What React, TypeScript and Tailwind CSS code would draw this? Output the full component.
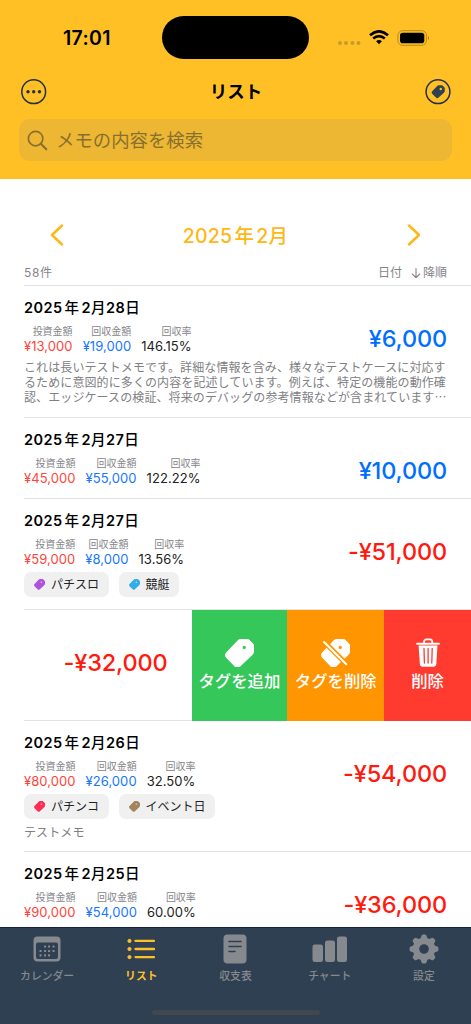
import {FC, ReactNode} from "react";
import clsx from "clsx";

type Tag = { name: string; color: string };

type Entry = {
  id: string;
  date: string;
  invest: string;
  payback: string;
  rate: string;
  total: string;
  plus?: boolean;
  tags?: Tag[];
  memo?: string;
};

const entries: Entry[] = [
  {
    id: "e1",
    date: "2025年2月28日",
    invest: "¥13,000",
    payback: "¥19,000",
    rate: "146.15%",
    total: "¥6,000",
    plus: true,
    memo: "これは長いテストメモです。詳細な情報を含み、様々なテストケースに対応す\nるために意図的に多くの内容を記述しています。例えば、特定の機能の動作確\n認、エッジケースの検証、将来のデバッグの参考情報などが含まれています…",
  },
  { id: "e2", date: "2025年2月27日", invest: "¥45,000", payback: "¥55,000", rate: "122.22%", total: "¥10,000", plus: true },
  {
    id: "e3",
    date: "2025年2月27日",
    invest: "¥59,000",
    payback: "¥8,000",
    rate: "13.56%",
    total: "-¥51,000",
    tags: [
      { name: "パチスロ", color: "text-[#af52de]" },
      { name: "競艇", color: "text-[#32ade6]" },
    ],
  },
];

const entriesAfterSwipe: Entry[] = [
  {
    id: "e5",
    date: "2025年2月26日",
    invest: "¥80,000",
    payback: "¥26,000",
    rate: "32.50%",
    total: "-¥54,000",
    tags: [
      { name: "パチンコ", color: "text-[#ff2d55]" },
      { name: "イベント日", color: "text-[#a2845e]" },
    ],
    memo: "テストメモ",
  },
  { id: "e6", date: "2025年2月25日", invest: "¥90,000", payback: "¥54,000", rate: "60.00%", total: "-¥36,000" },
];

const TagIcon: FC<{ className?: string; slash?: boolean }> = ({ className, slash }) => (
  <svg viewBox="0 0 86 85" className={className} fill="none">
    <path
      fill="currentColor"
      fillRule="evenodd"
      d="M46 0H66Q70 0 73 3L83 13Q86 16 86 20V38Q86 43 82 47L46 81Q37 89 28 81L4 56Q-4 48 4 39L38 4Q41 0 46 0ZM57 20a5 5 0 1 0 0 10a5 5 0 1 0 0-10Z"
    />
    {slash && (
      <>
        <path d="M4 3L80 79" stroke="#ff9500" strokeWidth="15" />
        <path d="M9 9L75 75" stroke="currentColor" strokeWidth="6" strokeLinecap="round" />
      </>
    )}
  </svg>
);

const Header: FC = () => (
  <header className="h-[179px] shrink-0 bg-[#ffc026]">
    <div className="grid h-[75px] grid-cols-[162px_147px_1fr] items-center">
      <div className="pt-[1px] pl-[63px] text-[19.5px] font-semibold leading-6 tracking-[0.35px]">17:01</div>
      <div className="h-[43px] rounded-full bg-black" />
      <div className="flex items-center pl-[28px]">
        <svg width="24" height="6" className="mt-[11px]" fill="#c99a2b">
          <circle cx="3" cy="3" r="2" />
          <circle cx="9" cy="3" r="2" />
          <circle cx="15.5" cy="3" r="2" />
          <circle cx="21.5" cy="3" r="2" />
        </svg>
        <svg width="20" height="15" viewBox="0 0 20 15" className="ml-[8px]" fill="none" stroke="#000" strokeWidth="2.6">
          <path d="M1 5.2Q10 -2.6 19 5.2" />
          <path d="M4.2 8.6Q10 3.8 15.8 8.6" />
          <path d="M7.1 11.2Q10 9 12.9 11.2L10 14.2Z" fill="#000" stroke="none" />
        </svg>
        <svg width="33" height="16" viewBox="0 0 33 16" className="ml-[8px]">
          <rect x="0.9" y="0.7" width="28.5" height="14.6" rx="4.6" fill="none" stroke="#b78a20" />
          <rect x="3" y="2.8" width="24.3" height="10.4" rx="2.8" />
          <path d="M31 5.6Q32.7 8 31 10.4Z" fill="#8a6918" />
        </svg>
      </div>
    </div>

    <div className="flex h-[33px] items-center justify-between px-[21px]">
      <svg width="26" height="26" viewBox="0 0 26 26" fill="#22304a">
        <circle cx="12.7" cy="12.7" r="11.9" fill="none" stroke="#22304a" strokeWidth="1.5" />
        <circle cx="7" cy="12.7" r="1.7" />
        <circle cx="12.7" cy="12.7" r="1.7" />
        <circle cx="18.5" cy="12.7" r="1.7" />
      </svg>
      <h1 className="text-[17.5px] font-bold leading-6">リスト</h1>
      <svg width="26" height="26" viewBox="0 0 26 26" className="-mr-[1px]">
        <circle cx="13" cy="12.7" r="11.9" fill="none" stroke="#22304a" strokeWidth="1.5" />
        <g transform="translate(6.6 6.2) scale(0.153)">
          <path
            fill="#2f4052"
            fillRule="evenodd"
            d="M46 0H66Q70 0 73 3L83 13Q86 16 86 20V38Q86 43 82 47L46 81Q37 89 28 81L4 56Q-4 48 4 39L38 4Q41 0 46 0ZM60 17a8 8 0 1 0 0 16a8 8 0 1 0 0-16Z"
          />
        </g>
      </svg>
    </div>

    <div className="mx-[19px] mt-[11px] flex h-[42px] items-center rounded-[11px] bg-[#edb733] pl-[8px] text-[#87702f]">
      <svg width="21" height="21" viewBox="0 0 21 21" fill="none" stroke="currentColor" strokeWidth="1.7" strokeLinecap="round">
        <circle cx="8.6" cy="8.6" r="7.2" />
        <path d="M13.8 13.8L19.3 19.3" strokeWidth="2.1" />
      </svg>
      <span className="ml-[8px] text-[18.4px] leading-6">メモの内容を検索</span>
    </div>
  </header>
);

// digits and kanji get their own weight, with a little air after the year number
const DateText: FC<{ value: string; digits: string }> = ({ value, digits }) => (
  <>
    {value.split(/(\d+)/).filter(Boolean).map((part, index) => (
      <span key={index} className={clsx(/\d/.test(part) ? digits : "font-medium", part === "年" && "mx-[2px]")}>
        {part}
      </span>
    ))}
  </>
);

const Stat: FC<{ label: string; value: string; color: string }> = ({ label, value, color }) => (
  <div className="text-right">
    <div className="text-[10px] leading-3 text-[#858589]">{label}</div>
    <div className={clsx("mt-[1px] text-[13px] leading-4 tracking-[0.06px]", color)}>{value}</div>
  </div>
);

const EntryRow: FC<{ entry: Entry }> = ({ entry }) => (
  <li className={clsx("ml-6 border-b border-[#e3e3e5] pt-[12px] pr-6", entry.memo && !entry.tags ? "pb-[13px]" : "pb-[12px]")}>
    <h3 className="flex text-[14.5px] leading-5 tracking-[0.45px]">
      <DateText value={entry.date} digits="font-semibold" />
    </h3>
    <div className="mt-[7px] flex h-[29px] items-center justify-between">
      <div className="flex gap-[10px]">
        <Stat label="投資金額" value={entry.invest} color="text-[#ff453b]" />
        <Stat label="回収金額" value={entry.payback} color="text-[#1677ff]" />
        <Stat label="回収率" value={entry.rate} color="text-[#222]" />
      </div>
      <div className={clsx("pb-[2px] text-[23.5px] font-medium leading-7 tracking-[-0.15px]", entry.plus ? "text-[#006fff]" : "text-[#ff1a10]")}>
        {entry.total}
      </div>
    </div>
    {entry.tags && (
      <div className="mt-[5px] flex gap-[10px]">
        {entry.tags.map((tag) => (
          <span key={tag.name} className="flex h-[25px] items-center rounded-[7px] bg-[#f0f0f1] pr-[9.5px] pl-[10px] text-[12px] text-[#222]">
            <TagIcon className={clsx("mr-[6px] w-[11px]", tag.color)} />
            {tag.name}
          </span>
        ))}
      </div>
    )}
    {entry.memo && (
      <p className="mt-[5px] whitespace-pre font-['Noto_Sans_CJK_JP',sans-serif] text-[12px] leading-[15px] tracking-[0.1px] text-[#808084]">
        {entry.memo}
      </p>
    )}
  </li>
);

const SwipeAction: FC<{ label: string; className: string; children: ReactNode }> = ({ label, className, children }) => (
  <button className={clsx("flex h-[111px] flex-col items-center justify-center text-white", className)}>
    <span className="flex h-[30px] items-center">{children}</span>
    <span className="mt-[1px] whitespace-nowrap text-[16.4px] font-medium leading-6">{label}</span>
  </button>
);

const SwipedRow: FC = () => (
  <li className="flex h-[111px]">
    <div className="ml-6 w-[167.5px] shrink-0 border-b border-[#e3e3e5] pt-[39px] pr-6 text-right text-[23.5px] font-medium leading-7 tracking-[-0.15px] text-[#ff1a10]">
      -¥32,000
    </div>
    <SwipeAction label="タグを追加" className="w-[96px] bg-[#35c759]">
      <TagIcon className="w-[29px]" />
    </SwipeAction>
    <SwipeAction label="タグを削除" className="w-[97px] bg-[#ff9500]">
      <TagIcon className="w-[29px]" slash />
    </SwipeAction>
    <SwipeAction label="削除" className="w-[87px] bg-[#ff3b30]">
      <svg width="24" height="30" viewBox="0 0 24 30" fill="none">
        <path d="M8 5V4Q8 1.3 10.5 1.3H14Q16.3 1.3 16.3 4V5" stroke="#fff" strokeWidth="1.7" />
        <path d="M1 5.8H23" stroke="#fff" strokeWidth="1.9" strokeLinecap="round" />
        <path d="M2.6 7.5H21.5L20.3 26Q20 28.7 17.4 28.7H6.7Q4.1 28.7 3.9 26Z" fill="#fff" />
        <path d="M8 10.5L8.4 25M12.1 10.5V25M16.2 10.5L15.8 25" stroke="#ff3b30" strokeWidth="1.3" strokeLinecap="round" />
      </svg>
    </SwipeAction>
  </li>
);

const calendarDots = [
  [11, 11.5], [15, 11.5], [19.5, 11.5],
  [6.5, 16], [11, 16], [15, 16], [19.5, 16],
  [6.5, 20.3], [11, 20.3], [15, 20.3],
];

const tabs: { label: string; icon: ReactNode }[] = [
  {
    label: "カレンダー",
    icon: (
      <svg width="28" height="28" viewBox="0 0 28 28" fill="currentColor">
        <path fillRule="evenodd" d="M4.5 1.5H23.5Q27.5 1.5 27.5 5.5V22.5Q27.5 26.5 23.5 26.5H4.5Q0.5 26.5 0.5 22.5V5.5Q0.5 1.5 4.5 1.5ZM5 7.5Q3 7.5 3 9.5V22Q3 24 5 24H23Q25 24 25 22V9.5Q25 7.5 23 7.5Z" />
        {calendarDots.map(([x, y]) => (
          <rect key={`${x}-${y}`} x={x} y={y - 1} width="2.1" height="2.1" rx="0.6" />
        ))}
      </svg>
    ),
  },
  {
    label: "リスト",
    icon: (
      <svg width="28" height="28" viewBox="0 0 28 28" fill="currentColor" stroke="currentColor">
        <path d="M8.5 5.9H27M8.5 14H27M8.5 22.1H27" strokeWidth="2.3" strokeLinecap="round" />
        <circle cx="2.5" cy="5.9" r="1.6" />
        <circle cx="2.5" cy="14" r="1.6" />
        <circle cx="2.5" cy="22.1" r="1.6" />
      </svg>
    ),
  },
  {
    label: "収支表",
    icon: (
      <svg width="24" height="30" viewBox="0 0 24 30">
        <rect x="0.5" y="0.5" width="23" height="29" rx="4" fill="currentColor" />
        <path d="M6 7.5H18M6 12.5H18M6 17.5H12" stroke="#2f4052" strokeWidth="1.6" strokeLinecap="round" />
      </svg>
    ),
  },
  {
    label: "チャート",
    icon: (
      <svg width="36" height="28" viewBox="0 0 36 28" fill="currentColor">
        <rect x="0.5" y="9.5" width="10.5" height="17.5" rx="2.3" />
        <rect x="13" y="5.5" width="10" height="21.5" rx="2.3" />
        <rect x="25" y="1.5" width="10" height="25.5" rx="2.3" />
      </svg>
    ),
  },
  {
    label: "設定",
    icon: (
      <svg width="30" height="30" viewBox="-15 -15 30 30" fill="currentColor">
        <circle r="8" fill="none" stroke="currentColor" strokeWidth="6.4" />
        {[0, 45, 90, 135, 180, 225, 270, 315].map((deg) => (
          <path key={deg} d="M-4 -9L-2.5 -13.2Q-2.1 -14.4 -0.9 -14.4H0.9Q2.1 -14.4 2.5 -13.2L4 -9Z" transform={`rotate(${deg})`} />
        ))}
      </svg>
    ),
  },
];

const TabBar: FC = () => (
  <nav className="flex h-[97.5px] shrink-0 flex-col items-center border-t border-[#17213f] bg-[#2f4052]">
    <div className="grid w-full grid-cols-5">
      {tabs.map((tab, index) => (
        <div key={tab.label} className={clsx("flex flex-col items-center", index === 1 ? "text-[#ffc026]" : "text-[#86898e]")}>
          <div className="mt-[6px] flex h-[30px] items-center">{tab.icon}</div>
          <span className={clsx("mt-[5px] text-[10.8px] leading-4", index === 1 ? "font-bold" : "font-medium")}>{tab.label}</span>
        </div>
      ))}
    </div>
    <div className="mt-[25px] h-[5px] w-[168px] rounded-full bg-[#42474e]" />
  </nav>
);

export default function App() {
  return (
    <div className="flex h-[1024px] w-[471px] flex-col overflow-hidden bg-white font-['Inter','Noto_Sans_CJK_JP',sans-serif] text-black">
      <Header />
      <main className="min-h-0 flex-1 overflow-hidden">
        <div className="mt-[44px] flex h-6 items-center justify-between px-[50px] text-[#ffb716]">
          <svg width="14" height="24" viewBox="0 0 14 24" fill="none" stroke="currentColor" strokeWidth="2.5" strokeLinecap="round" strokeLinejoin="round">
            <path d="M12 2.5L2 12L12 21.5" />
          </svg>
          <h2 className="flex pt-[1px] text-[19.5px] leading-6 tracking-[0.25px]">
            <DateText value="2025年2月" digits="font-medium" />
          </h2>
          <svg width="14" height="24" viewBox="0 0 14 24" fill="none" stroke="currentColor" strokeWidth="2.5" strokeLinecap="round" strokeLinejoin="round">
            <path d="M2 2.5L12 12L2 21.5" />
          </svg>
        </div>
        <div className="ml-6 flex h-[39px] items-end justify-between border-b border-[#e3e3e5] pr-6 pb-[4px] text-[12px] leading-4 text-[#858589]">
          <span className="tracking-[0.7px]">58件</span>
          <div className="flex items-center">
            <span>日付</span>
            <svg width="10" height="12" viewBox="0 0 10 12" className="ml-[9px] mr-[2px]" fill="none" stroke="currentColor" strokeWidth="1.1" strokeLinecap="round">
              <path d="M5 1.5V10.5M1.3 7L5 10.7L8.7 7" />
            </svg>
            <span>降順</span>
          </div>
        </div>
        <ul>
          {entries.map((entry) => (
            <EntryRow key={entry.id} entry={entry} />
          ))}
          <SwipedRow />
          {entriesAfterSwipe.map((entry) => (
            <EntryRow key={entry.id} entry={entry} />
          ))}
        </ul>
      </main>
      <TabBar />
    </div>
  );
}
